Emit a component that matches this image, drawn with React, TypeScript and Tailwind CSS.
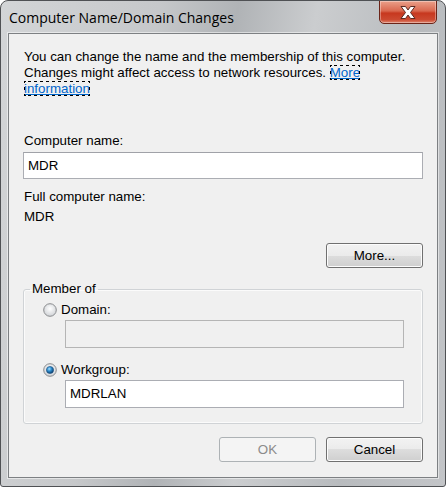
import React from "react"

const ui = { fontFamily: '"Liberation Sans", Arial, sans-serif' }

function Radio({ checked }: { checked?: boolean }) {
  return (
    <svg width="14" height="14" viewBox="0 0 14 14" className="shrink-0">
      <defs>
        <radialGradient id={checked ? "rf1" : "rf0"} cx="50%" cy="40%" r="60%">
          <stop offset="0%" stopColor="#ffffff" />
          <stop offset="100%" stopColor="#cfd2d6" />
        </radialGradient>
        <radialGradient id="dot" cx="40%" cy="35%" r="65%">
          <stop offset="0%" stopColor="#a9e0ff" />
          <stop offset="45%" stopColor="#2f8fd0" />
          <stop offset="100%" stopColor="#0b3e6e" />
        </radialGradient>
      </defs>
      <circle cx="7" cy="7" r="6.3" fill={checked ? "url(#rf1)" : "url(#rf0)"} stroke="#8a8c8f" strokeWidth="1" />
      {checked && <circle cx="7" cy="7" r="3.6" fill="url(#dot)" stroke="#1c4f7f" strokeWidth="0.6" />}
    </svg>
  )
}

function WinButton({ label, disabled }: { label: string; disabled?: boolean }) {
  return (
    <div
      className={
        disabled
          ? "w-[97px] h-[25px] rounded-[3px] border border-[#adb2b5] bg-[#f4f4f4] text-[#8b8b8b] flex items-center justify-center"
          : "w-[97px] h-[25px] rounded-[3px] border border-[#707070] bg-[linear-gradient(to_bottom,#f2f2f2_0%,#ebebeb_50%,#dddddd_50%,#cfcfcf_100%)] shadow-[inset_0_0_0_1px_#fcfcfc] text-black flex items-center justify-center"
      }
    >
      {label}
    </div>
  )
}

export default function App() {
  return (
    <div
      className="w-[446px] h-[487px] rounded-t-[8px] rounded-b-[3px] border border-[#4f5154] bg-[linear-gradient(100deg,#d3d5d7_0%,#c6c8ca_30%,#b0b3b6_45%,#cbcdcf_60%,#b8bbbe_80%,#c3c5c8_100%)] flex flex-col overflow-hidden"
      style={ui}
    >
      {/* title bar */}
      <div className="h-[32px] flex justify-between shrink-0">
        <div
          className="pl-[8px] pt-[8px] text-[14px] text-black leading-[18px]"
          style={{ fontFamily: '"Open Sans", "Noto Sans", sans-serif' }}
        >
          Computer Name/Domain Changes
        </div>
        <div className="mr-[8px] w-[58px] h-[24px] -mt-px rounded-b-[5px] border border-[#6b2418] bg-[linear-gradient(to_bottom,#eaa08a_0%,#d9684f_45%,#c7381f_55%,#cc4a31_85%,#de8670_100%)] shadow-[inset_0_0_0_1px_rgba(255,255,255,0.35)] flex items-center justify-center">
          <svg width="18" height="15" viewBox="0 0 18 15">
            <path
              d="M2 1.5 L6.5 1.5 L9 5 L11.5 1.5 L16 1.5 L11.5 7.5 L16 13.5 L11.5 13.5 L9 10 L6.5 13.5 L2 13.5 L6.5 7.5 Z"
              fill="#ffffff"
              stroke="#5a2a22"
              strokeWidth="1"
              strokeLinejoin="round"
            />
          </svg>
        </div>
      </div>

      {/* client area */}
      <div className="mx-[7px] mb-[8px] flex-1 border border-[#7d8083] shadow-[0_0_0_1px_rgba(255,255,255,0.5)] bg-[#f0f0f0] px-[14px] pt-[15px] text-[13.33px] leading-[16px] text-black flex flex-col">
        <p className="pl-[1px] pr-[12px]">
          You can change the name and the membership of this computer. Changes might affect access to network resources.{" "}
          <span className="text-[#0066cc] underline outline-1 -outline-offset-1 outline-dotted outline-black">More information</span>
        </p>

        <div className="mt-[36px] pl-[1px]">Computer name:</div>
        <div className="mt-[3px] h-[27px] border border-[#abadb3] border-t-[#a0a2a8] bg-white flex items-center pl-[4px]">MDR</div>

        <div className="mt-[10px] pl-[1px]">Full computer name:</div>
        <div className="mt-[4px] pl-[1px]">MDR</div>

        <div className="mt-[18px] flex justify-end">
          <WinButton label="More..." />
        </div>

        <fieldset className="mt-[13px] border border-[#d0d3d6] rounded-[3px] shadow-[inset_0_0_0_1px_#fbfbfb] pb-[15px]">
          <legend className="ml-[6px] px-[2px]">Member of</legend>
          <div className="mt-[5px] ml-[19px] flex items-center gap-[4px]">
            <Radio />
            <span>Domain:</span>
          </div>
          <div className="mt-[2px] ml-[41px] mr-[18px] h-[28px] border border-[#b5b5b5] bg-[#f0f0f0]" />
          <div className="mt-[14px] ml-[19px] flex items-center gap-[4px]">
            <Radio checked />
            <span>Workgroup:</span>
          </div>
          <div className="mt-[2px] ml-[41px] mr-[18px] h-[28px] border border-[#abadb3] bg-white flex items-center pl-[4px]">
            MDRLAN
          </div>
        </fieldset>

        <div className="mt-[13px] flex justify-end gap-[10px]">
          <WinButton label="OK" disabled />
          <WinButton label="Cancel" />
        </div>
      </div>
    </div>
  )
}
